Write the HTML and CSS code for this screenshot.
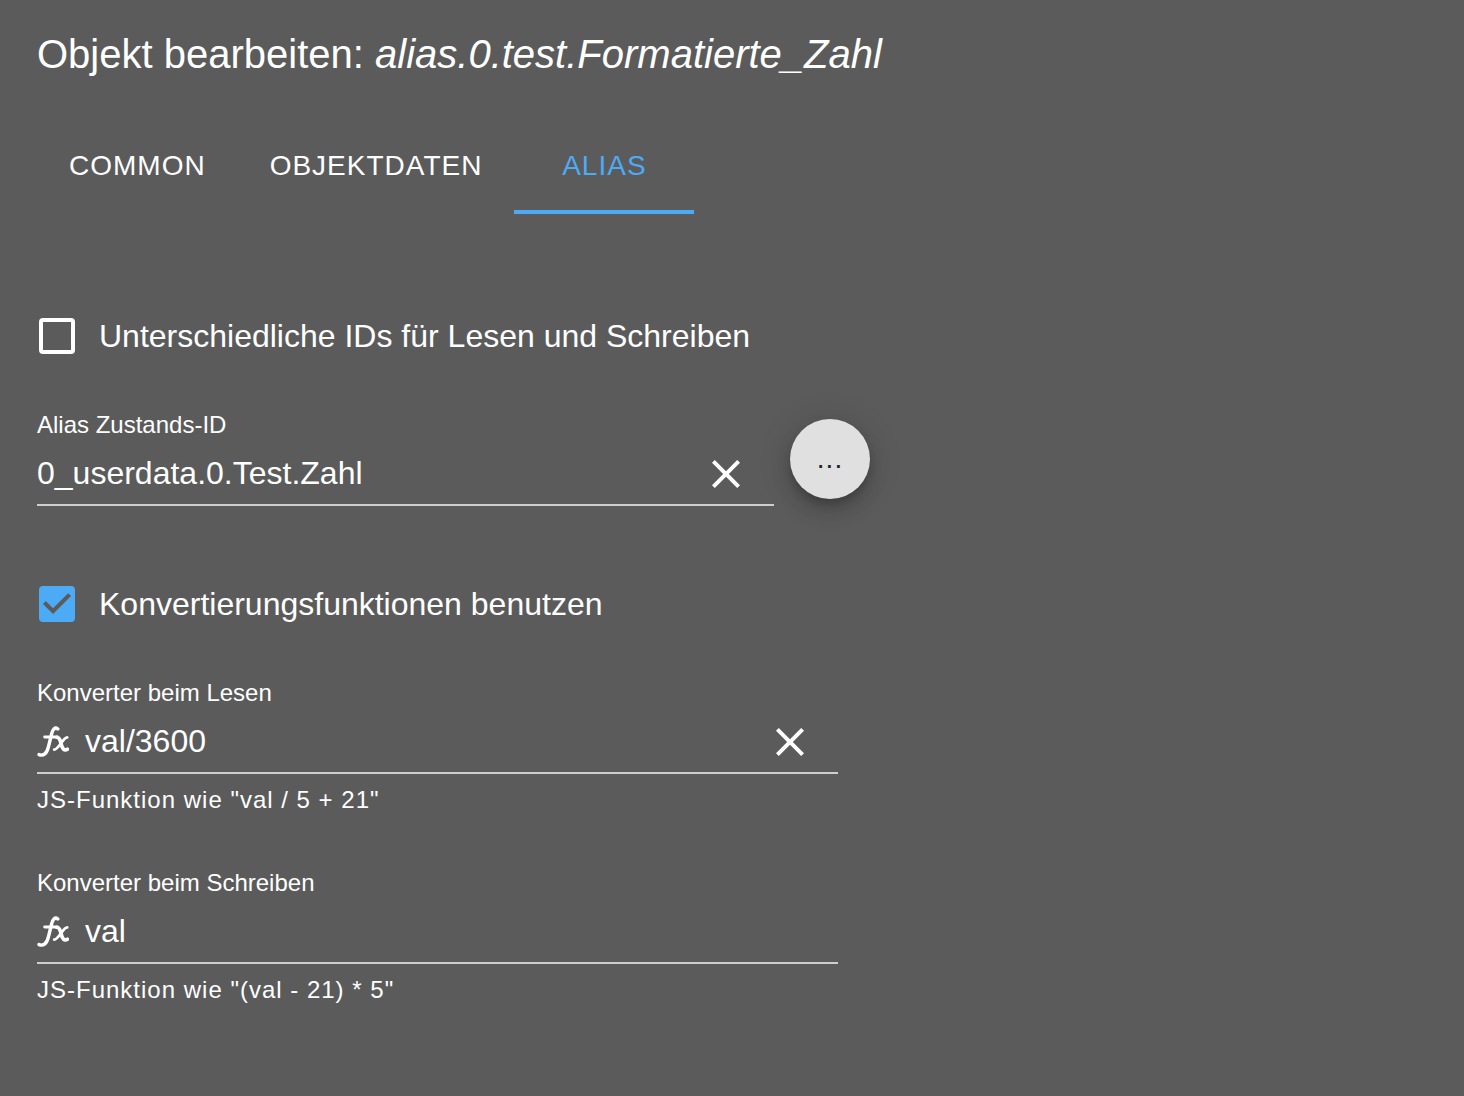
FILE: index.html
```html
<!DOCTYPE html>
<html lang="de">
<head>
  <meta charset="UTF-8" />
  <meta name="viewport" content="width=device-width, initial-scale=1.0" />
  <title>Objekt bearbeiten</title>
  <link rel="stylesheet" href="styles.css">
</head>
<body>
  <svg class="sprite" aria-hidden="true">
    <symbol id="icon-close" viewBox="0 0 24 24">
      <path d="M19 6.41L17.59 5 12 10.59 6.41 5 5 6.41 10.59 12 5 17.59 6.41 19 12 13.41 17.59 19 19 17.59 13.41 12z" fill="currentColor" />
    </symbol>
    <symbol id="icon-fx" viewBox="0 0 32 32">
      <g fill="none" stroke="currentColor" stroke-linecap="round" stroke-linejoin="round">
        <path d="M20.8 4C17.8 1.6 15.6 4.6 14.6 9L11.4 22C9.8 28.4 6.6 31.4 2 29.6" stroke-width="3.4" />
        <path d="M7.6 12H20.5" stroke-width="2.8" />
        <path d="M19.6 12.2C22.6 12 23.2 15.5 24.2 19C25.2 23.6 27.2 26.4 30.4 24.2" stroke-width="3.6" />
        <path d="M30.2 12.4C26.4 12.2 21.4 24.8 17.2 24.6" stroke-width="2.8" />
      </g>
    </symbol>
  </svg>

  <header>
    <h1>Objekt bearbeiten: <i>alias.0.test.Formatierte_Zahl</i></h1>
  </header>

  <nav class="tabs" role="tablist">
    <button class="tab" role="tab" aria-selected="false">COMMON</button>
    <button class="tab" role="tab" aria-selected="false">OBJEKTDATEN</button>
    <button class="tab active" role="tab" aria-selected="true">ALIAS</button>
  </nav>

  <form class="content">
    <label class="check">
      <input type="checkbox" />
      Unterschiedliche IDs für Lesen und Schreiben
    </label>

    <div class="id-row">
      <div class="field">
        <label for="aliasId">Alias Zustands-ID</label>
        <div class="control">
          <input type="text" id="aliasId" value="0_userdata.0.Test.Zahl" />
          <button type="button" class="clear" aria-label="Löschen"><svg><use href="#icon-close" /></svg></button>
        </div>
      </div>
      <button type="button" class="fab">...</button>
    </div>

    <label class="check">
      <input type="checkbox" checked />
      Konvertierungsfunktionen benutzen
    </label>

    <div class="field converter">
      <label for="readFn">Konverter beim Lesen</label>
      <div class="control">
        <svg class="fx"><use href="#icon-fx" /></svg>
        <input type="text" id="readFn" value="val/3600" />
        <button type="button" class="clear" aria-label="Löschen"><svg><use href="#icon-close" /></svg></button>
      </div>
      <p class="hint">JS-Funktion wie "val / 5 + 21"</p>
    </div>

    <div class="field converter">
      <label for="writeFn">Konverter beim Schreiben</label>
      <div class="control">
        <svg class="fx"><use href="#icon-fx" /></svg>
        <input type="text" id="writeFn" value="val" />
      </div>
      <p class="hint">JS-Funktion wie "(val - 21) * 5"</p>
    </div>
  </form>
</body>
</html>
```
FILE: styles.css
```css
:root {
  --primary-color: #4dabf5;
  --bg-color: #5b5b5b;
  --text-color: #ffffff;
  --line-color: #cecece;
}

* {
  box-sizing: border-box;
  margin: 0;
  padding: 0;
}

body {
  font-family: 'Liberation Sans', Arial, sans-serif;
  background-color: var(--bg-color);
  color: var(--text-color);
  padding: 22px 37px;
  min-height: 100vh;
}

button,
input {
  font-family: inherit;
  color: inherit;
  border: none;
  background: none;
}

button {
  cursor: pointer;
}

.sprite {
  display: none;
}

h1 {
  font-size: 40px;
  font-weight: normal;
  line-height: 64px;
}

.tabs {
  display: flex;
  margin-top: 32px;
}

.tab {
  min-width: 180px;
  height: 96px;
  padding: 4px 32px 0;
  font-size: 28px;
  letter-spacing: 1px;
  border-bottom: 4px solid transparent;
}

.tab.active {
  color: var(--primary-color);
  border-bottom-color: var(--primary-color);
}

.content {
  max-width: 833px;
  margin-top: 98px;
}

.check {
  display: flex;
  align-items: center;
  gap: 24px;
  height: 48px;
  padding-left: 2px;
  font-size: 32px;
}

.check input {
  appearance: none;
  width: 36px;
  height: 36px;
  border: 4px solid var(--text-color);
  border-radius: 4px;
}

.check input:checked {
  border: none;
  background-color: var(--primary-color);
}

.check input:checked::after {
  content: '';
  display: block;
  height: 36px;
  background-color: var(--bg-color);
  clip-path: polygon(39% 78%, 11% 50%, 19% 42%, 39% 62%, 81% 20%, 89% 28%);
}

.id-row {
  display: flex;
  align-items: center;
  gap: 16px;
  margin: 51px 0 74px;
}

.field {
  flex: 1;
}

.field label {
  display: block;
  font-size: 24px;
  line-height: 28px;
}

.control {
  display: flex;
  align-items: center;
  height: 67px;
  padding-top: 3px;
  border-bottom: 2px solid var(--line-color);
}

.control input {
  flex: 1;
  min-width: 0;
  font-size: 32px;
  outline: none;
}

.clear {
  width: 96px;
  height: 50px;
  padding-top: 2px;
}

.clear svg {
  display: block;
  width: 48px;
  height: 48px;
  margin: 0 auto;
}

.fx {
  width: 32px;
  height: 32px;
  margin-right: 16px;
}

.fab {
  width: 80px;
  height: 80px;
  border-radius: 50%;
  background-color: #e0e0e0;
  color: #222;
  font-size: 28px;
  letter-spacing: 1px;
  box-shadow: 0 6px 10px -2px rgba(0, 0, 0, 0.2), 0 12px 20px rgba(0, 0, 0, 0.14), 0 2px 36px rgba(0, 0, 0, 0.12);
}

.converter {
  max-width: 801px;
  margin-top: 51px;
}

.converter + .converter {
  margin-top: 55px;
}

.hint {
  margin-top: 12px;
  font-size: 24px;
  line-height: 28px;
  letter-spacing: 1px;
}
```
